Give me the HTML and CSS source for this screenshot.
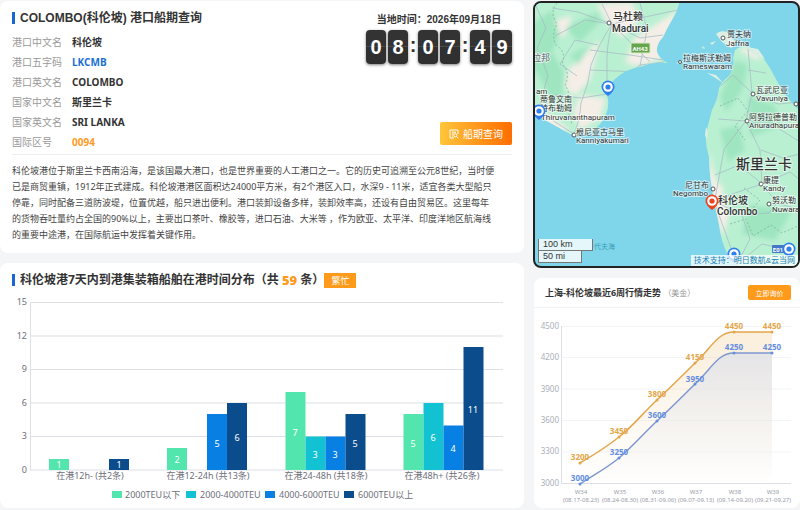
FILE: index.html
```
<!DOCTYPE html>
<html lang="zh-CN">
<head>
<meta charset="utf-8">
<meta name="viewport" content="width=device-width, initial-scale=1">
<title>COLOMBO(科伦坡) 港口船期查询</title>
<link rel="stylesheet" href="styles.css">
</head>
<body>
<main class="page">
  <div class="column">
    <section class="card port">
      <div class="port-top">
        <div>
          <h1 class="title title-latin">COLOMBO(科伦坡) 港口船期查询</h1>
          <dl class="facts">
            <dt>港口中文名</dt><dd>科伦坡</dd>
            <dt>港口五字码</dt><dd class="blue">LKCMB</dd>
            <dt>港口英文名</dt><dd>COLOMBO</dd>
            <dt>国家中文名</dt><dd>斯里兰卡</dd>
            <dt>国家英文名</dt><dd>SRI LANKA</dd>
            <dt>国际区号</dt><dd class="orange">0094</dd>
          </dl>
        </div>
        <div class="port-side">
          <div class="local">
            <p class="date">当地时间：2026年09月18日</p>
            <div class="clock">
              <span class="digit">0</span><span class="digit">8</span><span class="colon">:</span><span class="digit">0</span><span class="digit">7</span><span class="colon">:</span><span class="digit">4</span><span class="digit">9</span>
            </div>
          </div>
          <button class="search" type="button">
            <svg class="search-icon" viewBox="0 0 10 10" aria-hidden="true"><path d="M9 5V1H1v8h4M3 3.2h4M3 5h1.500M3 7h1"/><circle cx="6.300" cy="6.300" r="1.600"/><path d="M7.500 7.500L9.200 9.200"/></svg>
            船期查询
          </button>
        </div>
      </div>
      <p class="about">科伦坡港位于斯里兰卡西南沿海，是该国最大港口，也是世界重要的人工港口之一。它的历史可追溯至公元8世纪，当时便<br>已是商贸重镇，1912年正式建成。科伦坡港港区面积达24000平方米，有2个港区入口，水深9 - 11米，适宜各类大型船只<br>停靠，同时配备三道防波堤，位置优越，船只进出便利。港口装卸设备多样，装卸效率高，还设有自由贸易区。这里每年<br>的货物吞吐量约占全国的90%以上，主要出口茶叶、橡胶等，进口石油、大米等 ，作为欧亚、太平洋、印度洋地区航海线<br>的重要中途港，在国际航运中发挥着关键作用。</p>
    </section>

    <section class="card stay">
      <div class="stay-head">
        <h2 class="title">科伦坡港7天内到港集装箱船舶在港时间分布（共 <span class="count">59</span> 条）</h2>
        <span class="badge">繁忙</span>
      </div>
      <svg class="chart" viewBox="12 292 500 212" role="img" aria-label="在港时间分布">
        <path class="grid" d="M30 302.500H503M30 336H503M30 369.500H503M30 403H503M30 436.500H503M30 470H503M30.500 302V470"/>
        <g class="axis end">
          <text x="27" y="305">15</text><text x="27" y="339">12</text><text x="27" y="372">9</text><text x="27" y="406">6</text><text x="27" y="439">3</text><text x="27" y="473">0</text>
        </g>
        <g class="s1"><path d="M49 459h20v11h-20zM167 448h20v22h-20zM285.500 392h20v78h-20zM403.500 414h20v56h-20z"/></g>
        <g class="s2"><path d="M305.500 436.500h20V470h-20zM423.500 403h20v67h-20z"/></g>
        <g class="s3"><path d="M207 414h20v56h-20zM325.500 436.500h20V470h-20zM443.500 425.500h20V470h-20z"/></g>
        <g class="s4"><path d="M109 459h20v11h-20zM227 403h20v67h-20zM345.500 414h20v56h-20zM463.500 347h20v123h-20z"/></g>
        <g class="bar-value mid">
          <text x="59" y="468">1</text><text x="119" y="468">1</text>
          <text x="177" y="463">2</text><text x="217" y="447">5</text><text x="237" y="441">6</text>
          <text x="295" y="436">7</text><text x="315" y="458">3</text><text x="335" y="458">3</text><text x="355" y="447">5</text>
          <text x="413" y="447">5</text><text x="433" y="441">6</text><text x="453" y="452">4</text><text x="473" y="413">11</text>
        </g>
        <g class="axis mid">
          <text x="90" y="479">在港12h- (共2条)</text><text x="208" y="479">在港12-24h (共13条)</text><text x="326" y="479">在港24-48h (共18条)</text><text x="442" y="479">在港48h+ (共26条)</text>
        </g>
        <rect class="s1" x="112" y="491" width="10" height="7"/><rect class="s2" x="186" y="491" width="10" height="7"/><rect class="s3" x="265" y="491" width="10" height="7"/><rect class="s4" x="344" y="491" width="10" height="7"/>
        <g class="axis">
          <text x="125" y="498">2000TEU以下</text><text x="200" y="498">2000-4000TEU</text><text x="279" y="498">4000-6000TEU</text><text x="358" y="498">6000TEU以上</text>
        </g>
      </svg>
    </section>
  </div>

  <div class="column">
    <section class="map" aria-label="港口地图">
      <svg class="map-art" viewBox="535 3 263 263">
        <defs>
          <filter id="soft" x="-20%" y="-20%" width="140%" height="140%"><feGaussianBlur stdDeviation="2.500"/></filter>
          <clipPath id="india"><path d="M530 0H680Q678 10 673 18Q666 30 663 37Q656 44 657 52Q659 59 668 63Q652 62 643 66Q625 69 615 79Q608 85 607 95Q610 105 606 115Q600 127 590 132Q579 138 570 134Q558 127 545 120L530 108Z"/></clipPath>
          <clipPath id="lanka"><path d="M735 50Q741 45 748 47Q757 49 762 56Q770 67 777 81Q785 97 800 111V270H745Q734 263 727 253Q721 241 719 225L713 195Q709 173 709 157Q705 145 706 133L712 110Q718 99 719 88Q722 81 729 76Q735 66 733 58Z"/></clipPath>
          <g id="pin"><path d="M-5 4Q-3 7 0 9Q3 7 5 4Z"/><circle r="6.500"/><circle class="pin-hole" r="4.800"/><circle r="2.600"/></g>
        </defs>
        <g clip-path="url(#india)">
          <path class="land" d="M530 0H690V150H530Z"/>
          <g filter="url(#soft)">
            <path class="sand" d="M597 4L632 2L640 20L622 38L608 24ZM634 38L682 8L690 28L660 60L625 63ZM568 70L600 40L590 80L575 96L565 88ZM580 95L606 98L600 118L580 130L573 112ZM556 20L572 16L567 33L557 40ZM638 50L664 52L650 64L630 66ZM535 104L570 130L560 134L532 116Z"/>
            <path class="forest" d="M530 25L552 10L560 35L552 52L564 72L562 100L550 98L538 74L530 65ZM565 28L598 12L600 22L580 42ZM570 55L590 45L578 65Z"/>
          </g>
          <path class="border-line" d="M557 3Q549 12 557 24Q551 35 556 45Q567 52 562 64Q571 73 565 85Q572 95 566 105L572 124"/>
          <path class="road" d="M612 24Q600 42 591 65Q589 84 581 103Q580 120 574 134M612 24Q606 46 607 70V90M612 24L578 12L552 8M612 24L585 20L555 36M612 24L640 18L678 10M612 24L640 38L663 35M612 24L650 62M612 24L602 4M590 70L640 72M590 50L630 55L663 60M581 98L607 94M581 98L555 95M574 134L555 122L535 105M607 90L640 65L664 62M640 3L647 30L640 66M598 45L575 40L560 64L577 76M536 6L546 28L537 48L548 75L540 105"/>
        </g>
        <g clip-path="url(#lanka)">
          <path class="land" d="M700 40H800V270H700Z"/>
          <g filter="url(#soft)">
            <path class="forest" d="M735 60L748 65L742 91L726 112L720 97ZM748 96L775 105L780 126L750 137ZM748 205L792 210L775 240L742 234ZM720 130L739 126L745 150L728 162Z"/>
            <path class="sand" d="M708 175L721 187L729 216L723 237L714 212ZM743 46L763 57L757 60L740 51ZM709 150L716 180L725 190L710 192Z"/>
          </g>
          <path class="border-line" d="M720 106L738 98L748 111L735 126L745 140M730 224L746 219L753 236L771 225L782 233L798 226M744 188L760 200L748 214"/>
          <path class="road" d="M748 49L752 93L746 121L760 150L762 184M752 93L778 104L800 102M752 93L733 75L718 88M746 121L718 119M746 121L778 128L800 142M746 121L724 149L715 199M762 184L735 193L714 201L728 240L737 264M762 184L790 172L800 180M762 184L777 203L800 210M714 201L742 215L769 213L777 203M737 264L762 244L789 250M715 175L739 165L761 183M742 215L750 239L737 264M761 150L783 158L800 154M748 70L766 73"/>
        </g>
        <path class="islet" d="M716 34Q721 29 729 33L737 44L731 48L722 42ZM710 43l6-2-4 4zM747 47l11 2 7 10-9-6zM676 63l8-3-4 4zM707 73l9 2 7 8-9-6zM706 127l2 5-1 8-2-5z"/>
        <path class="land" d="M701 48l3-2 1 3z"/>
        <g class="town"><circle cx="609" cy="23" r="2"/><circle cx="723" cy="38" r="2"/><circle cx="680" cy="62" r="1.500"/><circle cx="753" cy="94" r="2"/><circle cx="796" cy="104" r="2"/><circle cx="747" cy="121" r="2"/><circle cx="574" cy="135" r="2"/><circle cx="713" cy="189" r="2"/><circle cx="761" cy="184" r="2"/><circle cx="769" cy="204" r="2"/></g>
        <rect class="shield" x="631" y="43" width="19" height="10" rx="1"/><text class="shield-text mid" x="640" y="51">AH43</text>
        <rect class="route" x="772" y="245" width="18" height="8" rx="1"/><text class="shield-text mid" x="778" y="252">E01</text>
        <g class="label big"><text x="613" y="20">马杜赖</text><text x="612" y="32">Madurai</text><text x="718" y="204">科伦坡</text><text x="717" y="215">Colombo</text></g>
        <g class="label small">
          <text x="727" y="37">贾夫纳</text><text x="726" y="46">Jaffna</text>
          <text x="683" y="61">拉梅斯沃勒姆</text><text x="683" y="69">Rameswaram</text>
          <text x="756" y="93">瓦武尼亚</text><text x="756" y="101">Vavuniya</text>
          <text x="749" y="120">阿努拉德普勒</text><text x="749" y="128">Anuradhapura</text>
          <text x="540" y="102">蒂鲁文南</text><text x="540" y="111">特布勒姆</text><text x="541" y="120">Thiruvananthapuram</text>
          <text x="576" y="135">根尼亚古马里</text><text x="576" y="143">Kanniyakumari</text>
          <text x="685" y="188">尼甘布</text><text x="673" y="196">Negombo</text>
          <text x="763" y="183">康提</text><text x="763" y="191">Kandy</text>
          <text x="772" y="203">努沃勒</text><text x="772" y="212">Nuwara</text>
          <text x="536" y="94">am</text>
        </g>
        <text class="label region" x="532" y="61">拉邦</text>
        <text class="label country" x="736" y="169">斯里兰卡</text>
        <text class="sea" x="594" y="249">代夫海</text>
        <g class="pin"><use href="#pin" x="608" y="87"/><use href="#pin" x="539" y="111"/><use href="#pin" x="734" y="254"/><use href="#pin" x="789" y="249"/></g>
        <g class="pin pin-red"><use href="#pin" x="712" y="201"/></g>
      </svg>
      <div class="scale"><div class="scale-km">100 km</div><div class="scale-mi">50 mi</div></div>
      <div class="credit">技术支持：<a href="#">明日数航&amp;云当网</a></div>
    </section>

    <section class="card trend">
      <header class="trend-head">
        <h2 class="trend-title">上海-科伦坡最近6周行情走势 <span class="unit">（美金）</span></h2>
        <button class="quote" type="button">立即询价</button>
      </header>
      <svg class="chart" viewBox="534 307 266 200" role="img" aria-label="最近6周行情走势">
        <defs>
          <linearGradient id="gold" x1="0" y1="0" x2="0" y2="1"><stop offset="0" stop-color="#e6a23c" stop-opacity=".18"/><stop offset="1" stop-color="#e6a23c" stop-opacity="0"/></linearGradient>
          <linearGradient id="blue" x1="0" y1="0" x2="0" y2="1"><stop offset="0" stop-color="#e2e3e8" stop-opacity=".9"/><stop offset="1" stop-color="#f0f0f3" stop-opacity="0"/></linearGradient>
        </defs>
        <path class="faint" d="M562 325.500H791M562 356.500H791M562 388H791M562 419.500H791M562 451H791"/>
        <path class="grid" d="M561.500 325V482.500H791"/>
        <g class="price-axis end"><text x="559" y="328">4500</text><text x="559" y="359">4200</text><text x="559" y="391">3900</text><text x="559" y="422">3600</text><text x="559" y="453">3300</text><text x="559" y="485">3000</text></g>
        <path fill="url(#gold)" d="M580 462C595 453 604 448 619 436C634 424 642 413 657 399C672 385 681 376 695 362C710 349 717 331 734 331H772V483H580Z"/>
        <path fill="url(#blue)" d="M580 483C595 473 604 469 619 457C634 444 642 434 657 420C672 406 681 397 695 383C710 370 717 352 734 352H772V483H580Z"/>
        <g class="gold">
          <path class="line" d="M580 462C595 453 604 448 619 436C634 424 642 413 657 399C672 385 681 376 695 362C710 349 717 331 734 331H772"/>
          <circle cx="580" cy="462" r="1.500"/><circle cx="619" cy="436" r="1.500"/><circle cx="657" cy="399" r="1.500"/><circle cx="695" cy="362" r="1.500"/><circle cx="734" cy="331" r="1.500"/><circle cx="772" cy="331" r="1.500"/>
          <g class="point mid"><text x="580" y="459">3200</text><text x="619" y="433">3450</text><text x="657" y="396">3800</text><text x="695" y="359">4150</text><text x="734" y="328">4450</text><text x="772" y="328">4450</text></g>
        </g>
        <g class="azure">
          <path class="line" d="M580 483C595 473 604 469 619 457C634 444 642 434 657 420C672 406 681 397 695 383C710 370 717 352 734 352H772"/>
          <circle cx="580" cy="483" r="1.500"/><circle cx="619" cy="457" r="1.500"/><circle cx="657" cy="420" r="1.500"/><circle cx="695" cy="383" r="1.500"/><circle cx="734" cy="352" r="1.500"/><circle cx="772" cy="352" r="1.500"/>
          <g class="point mid"><text x="580" y="480">3000</text><text x="619" y="454">3250</text><text x="657" y="417">3600</text><text x="695" y="381">3950</text><text x="734" y="349">4250</text><text x="772" y="349">4250</text></g>
        </g>
        <g class="week mid"><text x="581" y="493">W34</text><text x="620" y="493">W35</text><text x="658" y="493">W36</text><text x="696" y="493">W37</text><text x="735" y="493">W38</text><text x="773" y="493">W39</text>
        <text x="581" y="501">(08.17-08.23)</text><text x="620" y="501">(08.24-08.30)</text><text x="658" y="501">(08.31-09.06)</text><text x="696" y="501">(09.07-09.13)</text><text x="735" y="501">(09.14-09.20)</text><text x="773" y="501">(09.21-09.27)</text></g>
      </svg>
    </section>
  </div>
</main>
</body>
</html>
```
FILE: styles.css
```
* { box-sizing: border-box; }
body {
  margin: 0;
  background: #f4f5f6;
  color: #333;
  font-family: "Noto Sans", "Noto Sans CJK SC", sans-serif;
  font-size: 10px;
}
h1, h2, p, dl, dd { margin: 0; }
button { border: 0; padding: 0; font-family: inherit; color: #fff; cursor: pointer; }

.page {
  display: grid;
  grid-template-columns: 524fr 267fr;
  gap: 9px;
  padding-top: 1px;
}
.column { display: flex; flex-direction: column; gap: 10px; min-width: 0; }
.card { background: #fff; border-radius: 8px; }

.title {
  display: flex;
  align-items: center;
  white-space: pre;
  font-size: 12px;
  line-height: 16px;
  font-weight: 700;
}
.title::before {
  content: "";
  width: 3px;
  height: 12px;
  margin-right: 5px;
  background: #1967d2;
}
.title-latin { font-family: "Liberation Sans", "Noto Sans CJK SC", sans-serif; }

.port { padding: 9px 12px 10px; }
.port-top {
  display: flex;
  justify-content: space-between;
  padding-bottom: 2px;
  border-bottom: 1px solid #eee;
}
.facts {
  display: grid;
  grid-template-columns: 60px auto;
  line-height: 20px;
  padding-top: 6px;
}
.facts dt { color: #999; }
.facts dd { font-weight: 700; }
.facts .blue { color: #1a6fd6; }
.facts .orange { color: #ff9a1f; }

.port-side {
  display: flex;
  flex-direction: column;
  justify-content: space-between;
  align-items: flex-end;
  padding-bottom: 7px;
}
.date {
  font: 700 10px/20px "Liberation Sans", "Noto Sans CJK SC", sans-serif;
  text-align: center;
}
.clock { display: flex; gap: 2px; font: 700 20px/34px "Liberation Sans", sans-serif; }
.digit {
  width: 20px;
  border-radius: 4px;
  background: linear-gradient(#333 0 16px, #4a4a4a 16px 17px, #303030 17px);
  box-shadow: 0 1px 3px rgba(0, 0, 0, .5);
  color: #fff;
  text-align: center;
}
.colon { width: 6px; display: flex; justify-content: center; line-height: 30px; }
.search {
  display: flex;
  align-items: center;
  justify-content: center;
  gap: 4px;
  width: 72px;
  height: 23px;
  border-radius: 2px;
  background: linear-gradient(90deg, #ffc53a, #ff6d00);
  font-size: 10px;
}
.search-icon { width: 10px; height: 10px; fill: none; stroke: #fff; stroke-width: 1; }
.about { padding-top: 8px; font-size: 9px; line-height: 16px; color: #444; }

.stay { flex: 1; padding: 9px 12px 4px; }
.stay-head { display: flex; align-items: center; }
.count { color: #ff9a1f; font-size: 13px; font-weight: 900; }
.badge {
  padding: 0 7px;
  background: #ff9a1a;
  color: #fff;
  font-size: 9px;
  line-height: 15px;
}
.chart { display: block; width: 100%; height: auto; margin-top: 4px; }
.grid { fill: none; stroke: #dcdfe6; stroke-width: 1; }
.faint { fill: none; stroke: #f3f4f7; stroke-width: 1; }
.axis { fill: #6e7079; font-size: 9px; }
.bar-value { fill: #fff; font-size: 9px; }
.mid { text-anchor: middle; }
.end { text-anchor: end; }
.s1 { fill: #52e5ad; }
.s2 { fill: #13c2d2; }
.s3 { fill: #087fe2; }
.s4 { fill: #0b4c8c; }

.map {
  position: relative;
  overflow: hidden;
  border: 2px solid #222;
  border-radius: 8px;
  background: #7fd5ea;
  font-family: Roboto, "Noto Sans CJK SC", sans-serif;
}
.map-art { display: block; width: 100%; height: auto; }
.land { fill: #baf0d2; }
.forest { fill: #9ee5c0; }
.sand { fill: #f4eee7; }
.islet { fill: #dcefe6; }
.road { fill: none; stroke: #a5b7c4; stroke-width: 1; opacity: .7; }
.border-line { fill: none; stroke: #79aa99; stroke-width: 1; stroke-dasharray: 2 2; opacity: .7; }
.town { fill: #fff; stroke: #555; stroke-width: 1; }
.label { fill: #333; stroke: #fff; stroke-width: 2px; stroke-opacity: .6; paint-order: stroke; stroke-linejoin: round; }
.big { font-size: 10px; font-weight: 500; }
.small { font-size: 8px; }
.region { font-size: 9px; fill: #667; }
.country { font-size: 14px; font-weight: 500; }
.sea { font-size: 7px; fill: #3a9db8; }
.shield { fill: #65a64c; stroke: #d7ebc9; stroke-width: 1; }
.route { fill: #4477c9; }
.shield-text { font-size: 6px; font-weight: 700; fill: #fff; }
.pin { fill: #2f80ed; }
.pin-red { fill: #e8441f; }
.pin-hole { fill: #fff; }
.scale {
  position: absolute;
  left: 3px;
  bottom: 3px;
  font: 9px/11px "Liberation Sans", sans-serif;
  color: #333;
}
.scale-km, .scale-mi {
  padding: 0 4px;
  border: 1px solid #777;
  border-top: 0;
  background: rgba(255, 255, 255, .8);
}
.scale-km { width: 55px; }
.scale-mi { width: 44px; }
.credit {
  position: absolute;
  right: 0;
  bottom: 0;
  padding: 0 3px;
  background: rgba(255, 255, 255, .75);
  color: #1680b5;
  font: 8px/11px "Liberation Sans", "Noto Sans CJK SC", sans-serif;
}
.credit a { color: inherit; text-decoration: none; }

.trend { margin-left: 1px; }
.trend-head {
  display: flex;
  align-items: center;
  justify-content: space-between;
  height: 30px;
  padding: 0 9px 0 11px;
  border-bottom: 1px solid #f1f2f4;
}
.trend .chart { margin-top: 0; }
.trend-title { font-size: 9px; font-weight: 700; white-space: nowrap; }
.unit { color: #999; font-size: 8px; font-weight: 400; }
.quote {
  width: 43px;
  height: 15px;
  border-radius: 2px;
  background: #ff9a1a;
  font-size: 7px;
}
.price-axis { fill: #aaaeb8; font-size: 8px; }
.line { fill: none; stroke-width: 1.5px; }
.gold { fill: #e3a64b; }
.gold .line { stroke: #e3a64b; }
.azure { fill: #648fe0; }
.azure .line { stroke: #7f97cf; }
.point { font-size: 8px; font-weight: 700; }
.week { fill: #9a9ea8; font-size: 6px; }
```
